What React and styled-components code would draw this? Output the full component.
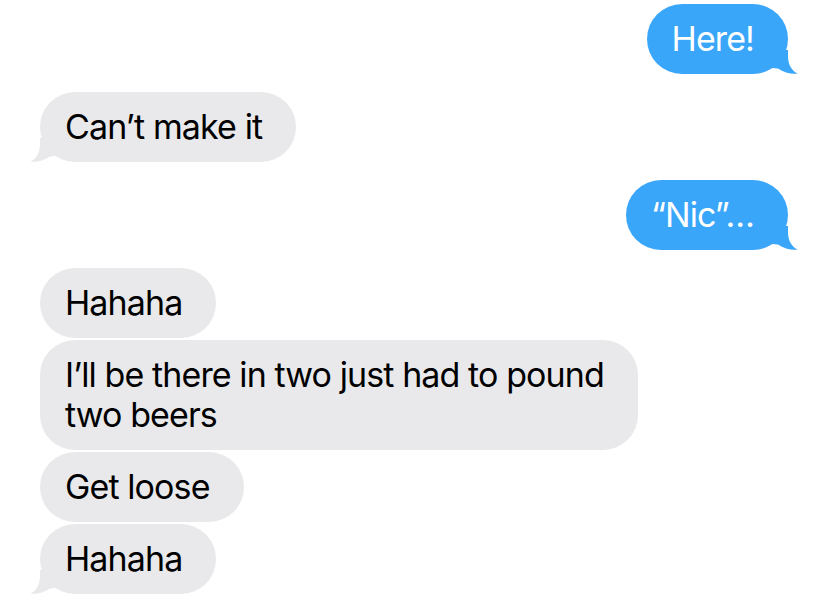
import React from "react";
import styled, { createGlobalStyle } from "styled-components";

const messages = [
  { id: 1, from: "me", text: "Here!", tail: true, gap: 4 },
  { id: 2, from: "them", text: "Can’t make it", tail: true, gap: 18 },
  { id: 3, from: "me", text: "“Nic”…", tail: true, gap: 18 },
  { id: 4, from: "them", text: "Hahaha", gap: 18 },
  { id: 5, from: "them", text: "I’ll be there in two just had to pound two beers", gap: 2 },
  { id: 6, from: "them", text: "Get loose", gap: 2 },
  { id: 7, from: "them", text: "Hahaha", tail: true, gap: 2 },
];

const GlobalStyle = createGlobalStyle`
  body {
    margin: 0;
    background: #ffffff;
    font-family: Inter, "Noto Sans", sans-serif;
  }
`;

const Thread = styled.div`
  display: flex;
  flex-direction: column;
  padding: 0 40px;
  width: 828px;
  height: 604px;
  box-sizing: border-box;
  overflow: hidden;
`;

const Row = styled.div`
  display: flex;
  justify-content: ${(p) => (p.$mine ? "flex-end" : "flex-start")};
  margin-top: ${(p) => p.$gap}px;
`;

const Bubble = styled.div`
  position: relative;
  box-sizing: border-box;
  max-width: 598px;
  padding: 15px 34px 15px 25px;
  border-radius: 35px;
  font-size: 34px;
  line-height: 40px;
  letter-spacing: -0.9px;
  color: ${(p) => (p.$mine ? "#ffffff" : "#000000")};
  background: ${(p) => (p.$mine ? "#3aa6fa" : "#e9e9eb")};
`;

const TailSvg = styled.svg`
  position: absolute;
  bottom: 0;
  width: 26px;
  height: 24px;
  ${(p) =>
    p.$mine
      ? "right: -10px;"
      : "left: -10px; transform: scaleX(-1);"}
`;

const Tail = ({ mine }) => (
  <TailSvg $mine={mine} viewBox="0 0 26 24">
    <path
      d="M16 0 L16 6 C16 14 19 20 25.5 23.6 C19 24.4 12 22.5 6 18.5 L0 18 L0 0 Z"
      fill={mine ? "#3aa6fa" : "#e9e9eb"}
    />
  </TailSvg>
);

const App = () => {
  return (
    <>
      <GlobalStyle />
      <Thread>
        {messages.map((m) => {
          const mine = m.from === "me";
          return (
            <Row key={m.id} $mine={mine} $gap={m.gap}>
              <Bubble $mine={mine}>
                {m.text}
                {m.tail ? <Tail mine={mine} /> : null}
              </Bubble>
            </Row>
          );
        })}
      </Thread>
    </>
  );
};

export default App;
